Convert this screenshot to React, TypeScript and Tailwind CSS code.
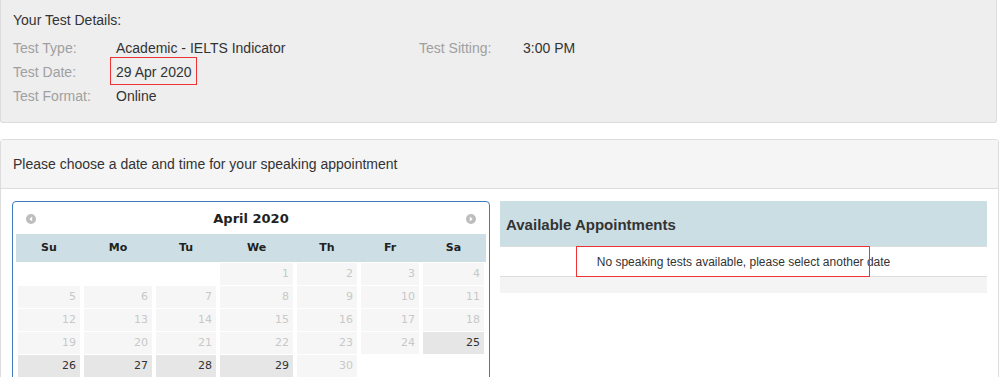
import React from "react";

const COLS = ["62px", "68px", "60px", "73px", "60px", "58px", "61px"];
const DAYS = ["Su", "Mo", "Tu", "We", "Th", "Fr", "Sa"];

// April 2020 starts on a Wednesday; 25-29 are selectable
const cells: (number | null)[] = [null, null, null, ...Array.from({ length: 30 }, (_, i) => i + 1)];
const active = new Set([25, 26, 27, 28, 29]);

function Arrow({ dir }: { dir: "prev" | "next" }) {
  return (
    <svg width="10" height="10" viewBox="0 0 10 10">
      <circle cx="5" cy="5" r="5" fill="#bdbdbd" />
      {dir === "prev" ? (
        <path d="M6.2 2.6 L3.4 5 L6.2 7.4 Z" fill="#fff" />
      ) : (
        <path d="M3.8 2.6 L6.6 5 L3.8 7.4 Z" fill="#fff" />
      )}
    </svg>
  );
}

export default function App() {
  return (
    <div className="w-[1000px] bg-white text-[14px] text-[#333] font-['Liberation_Sans',Arial,sans-serif]">
      {/* Test details */}
      <div className="w-[997px] h-[123px] bg-[#eeeeee] border border-t-0 border-[#dcdcdc] rounded-b-[3px] pl-[12px] pt-[10px]">
        <div className="h-[20px] leading-[20px]">Your Test Details:</div>
        <div className="mt-[6px] grid grid-cols-[103px_303px_104px_1fr] leading-[24px]">
          <div className="text-[#a0a0a0]">Test Type:</div>
          <div>Academic - IELTS Indicator</div>
          <div className="text-[#a0a0a0]">Test Sitting:</div>
          <div>3:00 PM</div>
          <div className="text-[#a0a0a0]">Test Date:</div>
          <div className="relative">
            29 Apr 2020
            <div className="absolute left-[-6px] top-[-3px] w-[87px] h-[28px] border border-[#ee3333]" />
          </div>
          <div />
          <div />
          <div className="text-[#a0a0a0]">Test Format:</div>
          <div>Online</div>
        </div>
      </div>

      {/* Speaking appointment */}
      <div className="mt-[16px] w-[999px] border border-[#dddddd] rounded-t-[3px]">
        <div className="h-[49px] bg-[#f5f5f5] border-b border-[#dddddd] pl-[12px] flex items-center">
          Please choose a date and time for your speaking appointment
        </div>
        <div className="flex items-start pl-[11px] pr-[11px] pt-[12px]">
          {/* Calendar */}
          <div className="w-[478px] border border-[#3f7cb8] rounded-[4px] px-[3px] pt-[1px] pb-[3px] font-['DejaVu_Sans',Verdana,sans-serif]">
            <div className="h-[31px] flex items-center justify-between px-[10px]">
              <Arrow dir="prev" />
              <div className="font-bold text-[13px] text-[#222]">April 2020</div>
              <Arrow dir="next" />
            </div>
            <div
              className="grid h-[28px] bg-[#cddfe5] px-[2px] gap-x-[4px] items-center"
              style={{ gridTemplateColumns: COLS.join(" ") }}
            >
              {DAYS.map((d) => (
                <div key={d} className="text-center font-bold text-[11px] text-[#222]">
                  {d}
                </div>
              ))}
            </div>
            <div
              className="grid px-[2px] pt-[1px] gap-x-[4px] gap-y-[1px]"
              style={{ gridTemplateColumns: COLS.join(" "), gridAutoRows: "22px" }}
            >
              {cells.map((n, i) =>
                n === null ? (
                  <div key={i} />
                ) : (
                  <div
                    key={i}
                    className={`flex items-center justify-end pr-[4px] text-[11px] ${
                      active.has(n) ? "bg-[#e6e6e6] text-[#333]" : "bg-[#f6f6f6] text-[#c8c8c8]"
                    }`}
                  >
                    {n}
                  </div>
                )
              )}
            </div>
          </div>

          {/* Appointments */}
          <div className="ml-[10px] w-[487px]">
            <div className="h-[45px] bg-[#cbdee4] flex items-center pl-[6px] pt-[3px] font-bold text-[15px] text-[#333]">
              Available Appointments
            </div>
            <div className="relative h-[31px] border-t border-b border-[#dddddd] flex items-center justify-center text-[12px]">
              No speaking tests available, please select another date
              <div className="absolute left-[76px] top-[-1px] w-[294px] h-[31px] border border-[#ee3333]" />
            </div>
            <div className="h-[16px] bg-[#f4f4f4]" />
          </div>
        </div>
      </div>
    </div>
  );
}
